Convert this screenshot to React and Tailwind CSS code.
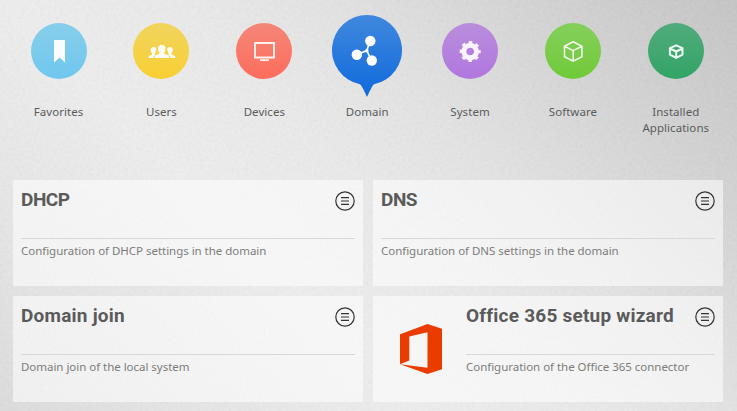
import React from "react";

const categories = [
  {
    label: "Favorites",
    circle: "from-[#87ceeb] to-[#6fc7ee]",
    icon: <path d="M23 17h11v22.500l-5.500-5-5.500 5z" fill="#fdfdfd" />,
  },
  {
    label: "Users",
    circle: "from-[#f1d45c] to-[#f8cf30]",
    icon: (
      <g fill="#fffdf4">
        <path d="M15.300 35c0-2 1-2.400 3.300-3.200.8-.4.8-1.100.2-1.700-2-3-1-6 1.700-6 2.200 0 2.800 1 2.900 2.800-.9 1.200-.9 2.600-1.200 3.800-.6.700-.4 1.200.3 1.500-1.300.5-2 1.300-2.200 2.800z" />
        <path d="M42.300 35c0-2-1-2.400-3.300-3.200-.8-.4-.8-1.100-.2-1.700 2-3 1-6-1.700-6-2.200 0-2.800 1-2.900 2.800.9 1.200.9 2.600 1.200 3.800.6.700.4 1.200-.3 1.500 1.300.5 2 1.300 2.200 2.800z" />
        <path d="M21.500 35c0-2.700 1.500-3 4.500-4.200.7-.4.600-1.200 0-1.900-1.800-3.300-1.200-7.200 2.800-7.200s4.600 3.900 2.800 7.200c-.6.700-.7 1.500 0 1.900 3 1.200 4.500 1.500 4.500 4.200z" />
      </g>
    ),
  },
  {
    label: "Devices",
    circle: "from-[#f48678] to-[#fd6c5c]",
    icon: (
      <g fill="none" stroke="#fff1ef">
        <path d="M19 20h19v14.500h-19z" strokeWidth="1.900" />
        <path d="M24 37.200h9" strokeWidth="1.800" />
      </g>
    ),
  },
  { label: "Domain", selected: true },
  {
    label: "System",
    circle: "from-[#b98ddc] to-[#b077df]",
    icon: (
      <g transform="translate(28.200 28.500)">
        <circle r="6.300" fill="none" stroke="#f8f3fc" strokeWidth="4.900" />
        <circle r="9.200" fill="none" stroke="#f8f3fc" strokeWidth="2.600" strokeDasharray="3.600 3.625" strokeDashoffset="1.800" />
      </g>
    ),
  },
  {
    label: "Software",
    circle: "from-[#85cf5b] to-[#70ca37]",
    icon: (
      <path
        d="M28.200 18.800l8.700 4.400v10.500l-8.700 4.400-8.700-4.400V23.200zM19.500 23.200l8.700 4.400 8.700-4.400M28.200 27.600v10.500"
        fill="none" stroke="#f1faeb" strokeWidth="1.600" strokeLinejoin="round"
      />
    ),
  },
  {
    label: "Installed Applications",
    circle: "from-[#50ab7c] to-[#31a466]",
    icon: (
      <path
        d="M28.200 22.300l6.300 2.800v6.500l-6.300 3.300-6.300-3.300v-6.500zM21.900 25.500l6.300 3 6.300-3M28.200 28.500v6.300"
        fill="none" stroke="#eef8f2" strokeWidth="2" strokeLinejoin="round"
      />
    ),
  },
];

function DomainMarker() {
  return (
    <svg className="-mt-2 h-[82px] w-[70px] shrink-0" viewBox="0 0 70 82">
      <defs>
        <linearGradient id="domainFill" x1="0" y1="0" x2="0" y2="1">
          <stop offset="0" stopColor="#4088de" />
          <stop offset="0.85" stopColor="#176edc" />
          <stop offset="1" stopColor="#116bdc" />
        </linearGradient>
      </defs>
      <path d="M35 0a35 35 0 0 1 7 69.300Q40.500 70 35 82 29.500 70 28 69.300A35 35 0 0 1 35 0z" fill="url(#domainFill)" />
      <path d="M24.500 39.800L34.800 35.600 38 26M34.800 35.600L39.500 45.500" fill="none" stroke="#fff" strokeWidth="1.600" />
      <g fill="#fff">
        <circle cx="38.300" cy="26" r="5.200" />
        <circle cx="24.800" cy="39.800" r="5.200" />
        <circle cx="39.800" cy="45.500" r="5.200" />
        <circle cx="34.900" cy="35.700" r="1.700" />
      </g>
    </svg>
  );
}

function Category({ item }) {
  return (
    <button className="flex w-[102.860px] shrink-0 flex-col items-center">
      <span className="flex h-[81px] flex-col items-center">
        {item.selected ? (
          <DomainMarker />
        ) : (
          <span className={`block size-14 overflow-hidden rounded-full bg-linear-to-b ${item.circle}`}>
            <svg className="size-14" viewBox="0 0 56 56">{item.icon}</svg>
          </span>
        )}
      </span>
      <span className="block w-[76px] text-center text-[11.500px] leading-4 tracking-[0.050px] text-[#5b5b5b]">
        {item.label}
      </span>
    </button>
  );
}

function MenuIcon() {
  return (
    <svg className="mt-[11px] size-5 shrink-0" viewBox="0 0 20 20" fill="none" stroke="#333">
      <circle cx="10" cy="10" r="9.200" strokeWidth="1.200" />
      <path d="M6 6.600h8M6 10h8M6 13.400h8" strokeWidth="1.200" />
    </svg>
  );
}

function OfficeLogo() {
  return (
    <div className="flex w-[85px] shrink-0 items-start pt-7 pl-[19px]">
      <svg className="h-[50px] w-[42px]" viewBox="0 0 42 50">
        <path d="M0 10.300L27.500 0 42 4.800V45.300L27.500 50 0 40.300 27.500 43.700V8.200L9.300 12.500V36.600L0 40.300z" fill="#eb3c00" />
      </svg>
    </div>
  );
}

function Card({ title, description, logo, tracking = "tracking-[0.220px]" }) {
  return (
    <article className="flex h-[106px] bg-white/55 px-2">
      {logo && <OfficeLogo />}
      <div className="min-w-0 flex-1">
        <header className="box-content flex h-[58px] justify-between border-b border-[#d8d8d8]">
          <h2 className={`pt-2 font-['Roboto','Liberation_Sans',sans-serif] text-[19px] leading-6 font-bold whitespace-nowrap text-[#5a5a5a] ${tracking}`}>
            {title}
          </h2>
          <MenuIcon />
        </header>
        <p className="pt-1 text-[11.500px] leading-4 tracking-[-0.030px] whitespace-nowrap text-[#7c7c7c]">{description}</p>
      </div>
    </article>
  );
}

export default function App() {
  return (
    <main className="relative isolate h-[411px] w-[737px] overflow-hidden bg-[linear-gradient(45deg,#dedede_0%,#e7e7e7_15%,#f0f0f0_36%,#ececec_52%,#e5e5e5_64%,#d5d5d5_82%,#c6c6c6_100%)] font-['Noto_Sans','Liberation_Sans',sans-serif]">
      <svg className="absolute inset-0 -z-10 size-full opacity-[0.080]">
        <filter id="paperGrain">
          <feTurbulence type="fractalNoise" baseFrequency="0.35" numOctaves="3" seed="4" stitchTiles="stitch" />
          <feColorMatrix type="saturate" values="0" />
          <feComponentTransfer><feFuncA type="linear" slope="0" intercept="1" /></feComponentTransfer>
        </filter>
        <rect width="100%" height="100%" filter="url(#paperGrain)" />
      </svg>
      <nav className="flex h-[180px] pt-[23px] pl-[7.200px]">
        {categories.map((item) => <Category key={item.label} item={item} />)}
      </nav>
      <section className="ml-[13px] grid grid-cols-[350px_350px] gap-2.5">
        <Card title="DHCP" description="Configuration of DHCP settings in the domain" tracking="tracking-[-0.450px]" />
        <Card title="DNS" description="Configuration of DNS settings in the domain" tracking="tracking-[-0.450px]" />
        <Card title="Domain join" description="Domain join of the local system" />
        <Card title="Office 365 setup wizard" description="Configuration of the Office 365 connector" logo />
      </section>
    </main>
  );
}
